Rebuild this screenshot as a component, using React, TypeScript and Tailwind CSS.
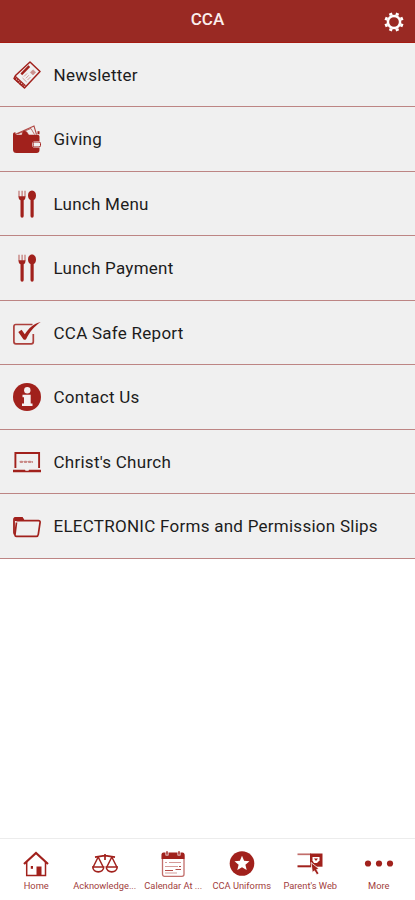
import type { FC, ReactNode } from "react"

const RED = '#a1211c'

const Svg: FC<{size?: number, children: ReactNode}> = ({size = 28, children}) => (
  <svg width={size} height={size} viewBox={`0 0 ${size} ${size}`} fill="none" stroke={RED} className="block shrink-0">
    {children}
  </svg>
)

const NewsletterIcon = () => (
  <Svg>
    <path d="M17 1 27 10.500 11.500 27 1 17.500 2.500 14.500Z" strokeWidth="1.500" strokeLinejoin="round"/>
    <path d="M2.200 15.200 12.500 24.800" strokeWidth="1.200"/>
    <path d="M1.800 17.300 11.500 26" strokeWidth="2.600" strokeDasharray="1.500 .7"/>
    <path d="M8.300 13.300 16.300 5.100" strokeWidth="2.400"/>
    <path d="m11 15.500 3-3M12.800 17.300l3-3M14.500 19l3-3M9.500 17l4.200 4" strokeWidth=".8" opacity=".5"/>
    <path d="m17.300 11.500 2.700-2.700 2.700 2.500-2.700 2.700Z" fill={RED} strokeWidth=".6" opacity=".45"/>
  </Svg>
)

const WalletIcon = () => (
  <Svg>
    <path d="M2 9.500 21 1 23.500 9.500" strokeWidth="1.100" opacity=".8"/>
    <path d="m5 8.800 13-5.300 3.500 6" strokeWidth=".8" opacity=".8"/>
    <path d="M9 10c0-5 4.500-5.800 6.500 0Z" fill={RED} strokeWidth=".5"/>
    <path d="M2.500 7.200C.2 7.200 0 8.500 0 10v14.500Q0 28 3.500 28h20q3 0 3-3v-2h-3.200Q19 23 19 19.500T23.300 16h3.200v-4.500q0-1.800-2-1.800H4.200q-1.800 0-1.800-1.200Z" fill={RED} stroke="none"/>
    <rect x="20.200" y="17" width="7.300" height="5" rx="1.500" strokeWidth="1" fill="#f0f0f0"/>
    <path d="M24.500 6.200h2v3h-2Z" fill={RED} stroke="none"/>
  </Svg>
)

const CutleryIcon = () => (
  <Svg>
    <path d="M6 .8v6M9.100 .8v6M12 .8v6" strokeWidth="1.100" opacity=".65"/>
    <path d="M5.500 6.200h7c0 2.500-.6 3.400-1.800 4V26q0 1.800-1.600 1.800T7.500 26V10.200c-1.300-.6-2-1.500-2-4Z" fill={RED} stroke="none"/>
    <path d="M19 .4c2.700 0 4 2.200 4 5 0 2.500-1 3.700-2.300 4.700V26q0 1.800-1.600 1.800T17.500 26V10.100C16.200 9.100 15 7.900 15 5.400c0-2.800 1.400-5 4-5Z" fill={RED} stroke="none"/>
  </Svg>
)

const CheckIcon = () => (
  <Svg>
    <path d="M19.500 5.500H2.800Q.9 5.500 .9 7.500v15.300q0 2 2 2h15.400q2 0 2-2V15" strokeWidth="1.700" opacity=".85"/>
    <path d="m5.300 13 3.300-2.200 3.200 4.500C16 9 20.300 4.800 27.700 3c-7 4.800-10.600 9.500-14.500 17q-1.500 1.700-3 0Z" fill={RED} stroke="none"/>
  </Svg>
)

const InfoIcon = () => (
  <Svg>
    <circle cx="14" cy="14" r="14" fill={RED} stroke="none"/>
    <circle cx="14.300" cy="7.200" r="3.200" fill="#f5f0f0" stroke="none"/>
    <path d="M9.500 11.800h8.200v8.700h1.800V23H9v-2.500h2v-6.200H9.500Z" fill="#f5f0f0" stroke="none"/>
  </Svg>
)

const LaptopIcon = () => (
  <Svg>
    <path d="M2.400 20V5h23.700v15" strokeWidth="1.900"/>
    <path d="M0 21.800h12l.5 1h3l.5-1h12v2.400H0Z" fill={RED} stroke="none"/>
    <path d="M7 13q.7 3 1.400 0 .7 3 1.400 0m1.300 0q.7 3 1.400 0 .7 3 1.400 0m1.300 0q.7 3 1.400 0 .7 3 1.400 0m1.300 0v2" strokeWidth="1.200" opacity=".5"/>
  </Svg>
)

const FolderIcon = () => (
  <Svg>
    <path d="M2 22.500Q1 22 1 20.500V7.500Q1 6 2.500 6H9l1.500 2.200" strokeWidth="1.800"/>
    <path d="M1.500 5.200h8l2 3.800h-10Z" fill={RED} stroke="none"/>
    <path d="M3.500 8.700h22q1.800 0 1.600 1.600l-1.800 12q-.3 2-2 2H3.500q-1.700 0-1.500-1.800l1.500-12" strokeWidth="1.700" strokeLinejoin="round"/>
  </Svg>
)

const HomeIcon = () => (
  <Svg size={26}>
    <path d="M1 13 13 2 25 13" strokeWidth="2.200"/>
    <path d="M3.700 11v13.500h18.800V11" strokeWidth="1.500"/>
    <path d="M13.500 24.500V15.500h5v9Z" fill={RED} stroke="none"/>
    <path d="M7.800 15h2.200v2.800H7.800Z" fill={RED} stroke="none"/>
  </Svg>
)

const ScalesIcon = () => (
  <Svg size={26}>
    <path d="M3 6.200 11 4.800h4l8 1.400M13 3v6" strokeWidth="1.700"/>
    <path d="m6.200 6-5 10m5-10 5 10m8.600-10-5 10m5-10 5 10" strokeWidth="1.500"/>
    <path d="M.8 16h10.900c0 6.500-10.900 6.500-10.900 0Zm13.500 0h10.900c0 6.500-10.900 6.500-10.900 0Z" strokeWidth="1.600"/>
  </Svg>
)

const CalendarIcon = () => (
  <Svg size={26}>
    <rect x="2.500" y="3" width="21.500" height="22.300" rx="2" strokeWidth="1.300" opacity=".65"/>
    <path d="M3.500 1.500h19q2 0 2 2V8h-23V3.500q0-2 2-2Z" fill={RED} stroke="none"/>
    <path d="M7 0v4.500M19 0v4.500" stroke="#fff" strokeWidth="3"/>
    <path d="M7 .3v3.500M19 .3v3.500" strokeWidth="1.500"/>
    <path d="M5 11.500h2m2 0h12M5 15.500h13M5 22h12" strokeWidth="1.100" opacity=".45"/>
    <path d="M5 19.500h8m2.500-1H21M19 15.500h2" strokeWidth="1.200" opacity=".8"/>
  </Svg>
)

const StarIcon = () => (
  <Svg size={26}>
    <circle cx="13" cy="12.500" r="12.300" fill={RED} stroke="none"/>
    <path d="m13 4.800 2.100 5 5.400.4-4.100 3.500 1.300 5.300-4.700-2.800L8.300 19l1.300-5.300-4.100-3.500 5.400-.4Z" fill="#fff" stroke="none"/>
  </Svg>
)

const WebIcon = () => (
  <Svg size={26}>
    <path d="M.5 3.300H14" strokeWidth="1.700" opacity=".65"/>
    <path d="M.5 15.300H14" strokeWidth="2"/>
    <path d="M13 2.500h12.500v13.200H13Z" fill={RED} stroke="none"/>
    <path d="M15.500 6h7v3.500l-2.500 2.500h-3l-1.500-2.500Z" fill="#fff" stroke="none"/>
    <path d="M17 7.500h4l-2 2.500Z" fill={RED} stroke="none"/>
    <path d="m14 11.500 8 6.300-2.300.7 2.300 4-2.200 1.300-2.400-4-2 1.800Z" fill={RED} stroke="#fff" strokeWidth=".8"/>
  </Svg>
)

const MoreIcon = () => (
  <svg width="30" height="26" viewBox="0 0 30 26" fill={RED} className="block">
    <circle cx="4" cy="12.500" r="3.100"/>
    <circle cx="15" cy="12.500" r="3.100"/>
    <circle cx="26" cy="12.500" r="3.100"/>
  </svg>
)

const GearIcon = () => (
  <svg width="20" height="20" viewBox="0 0 20 20" fill="none" stroke="#fff" className="block">
    <circle cx="10" cy="10" r="6.100" strokeWidth="2.500"/>
    <path d="m12.700 3.500 1-2.400M16.500 7.300l2.400-1M16.500 12.700l2.400 1M12.700 16.500l1 2.400M7.300 16.500l-1 2.400M3.500 12.700l-2.400 1M3.500 7.300l-2.400-1M7.300 3.500l-1-2.400" strokeWidth="3.200"/>
  </svg>
)

const MENU = [
  { title: 'Newsletter', icon: <NewsletterIcon/> },
  { title: 'Giving', icon: <WalletIcon/> },
  { title: 'Lunch Menu', icon: <CutleryIcon/> },
  { title: 'Lunch Payment', icon: <CutleryIcon/> },
  { title: 'CCA Safe Report', icon: <CheckIcon/> },
  { title: 'Contact Us', icon: <InfoIcon/> },
  { title: "Christ's Church", icon: <LaptopIcon/> },
  { title: 'ELECTRONIC Forms and Permission Slips', icon: <FolderIcon/> },
]

const TABS = [
  { title: 'Home', icon: <HomeIcon/> },
  { title: 'Acknowledge...', icon: <ScalesIcon/> },
  { title: 'Calendar At ...', icon: <CalendarIcon/> },
  { title: 'CCA Uniforms', icon: <StarIcon/> },
  { title: "Parent's Web", icon: <WebIcon/> },
  { title: 'More', icon: <MoreIcon/> },
]

const MenuRow: FC<{title: string, icon: ReactNode}> = ({title, icon}) => (
  <li className="flex h-[64.5px] items-center gap-[12.5px] border-b border-[#bd8584] bg-[#f0f0f0] pl-[13px] pt-px">
    {icon}
    <span className="whitespace-nowrap text-[17px] leading-6 tracking-[0.26px] text-[#1c1c1c]">{title}</span>
  </li>
)

const Tab: FC<{title: string, icon: ReactNode}> = ({title, icon}) => (
  <div className="flex min-w-0 flex-1 flex-col items-center pt-3">
    {icon}
    <span className="mt-[3px] whitespace-nowrap text-[9.3px] leading-3 text-[#a1403c]">{title}</span>
  </div>
)

const App: FC = () => {
  return (
    <div className="flex h-[900px] w-full flex-col bg-white font-['Roboto',sans-serif]">
      <header className="grid h-[42.5px] shrink-0 grid-cols-[1fr_auto_1fr] items-center border-b border-[#a51b12] bg-[#992923] pr-[11px]">
        <h1 className="col-start-2 pb-[3px] pl-[11px] text-[17px] font-medium leading-6 text-[#fbeeed]">CCA</h1>
        <div className="justify-self-end pt-[2px]"><GearIcon/></div>
      </header>
      <ul className="flex-1">
        {MENU.map(item => <MenuRow key={item.title} {...item}/>)}
      </ul>
      <nav className="flex h-[62px] shrink-0 border-t border-[#ececec] px-[2px]">
        {TABS.map(tab => <Tab key={tab.title} {...tab}/>)}
      </nav>
    </div>
  )
}

export default App
